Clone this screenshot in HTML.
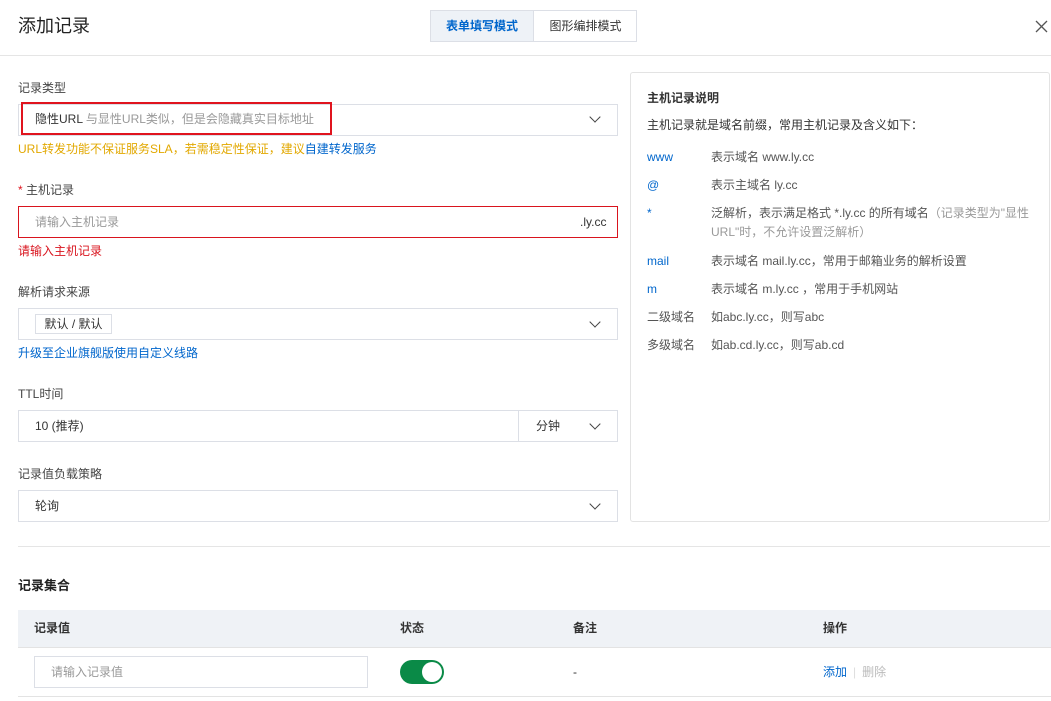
<!DOCTYPE html>
<html><head><meta charset="utf-8"><style>
*{margin:0;padding:0;box-sizing:border-box}
body{width:1051px;height:701px;background:#fff;font-family:"Liberation Sans","Noto Sans CJK SC",sans-serif;font-size:12px;color:#333;position:relative;overflow:hidden}
.a{position:absolute;white-space:nowrap}
.box{position:absolute;border:1px solid #dcdfe6;background:#fff}
.lbl{position:absolute;color:#444;font-size:12px;line-height:16px}
.chev{position:absolute;width:8px;height:8px;border-right:1.3px solid #444;border-bottom:1.3px solid #444;transform:rotate(45deg)}
.blue{color:#0066cc}
.rp .a{line-height:16px}
</style></head><body>
<div class="a" style="left:18px;top:13px;font-size:18px;line-height:26px;color:#222">添加记录</div>
<div class="box" style="left:430px;top:10px;width:207px;height:32px;border-color:#dcdfe6"></div>
<div class="a" style="left:431px;top:11px;width:103px;height:30px;background:#eef2f7;border-right:1px solid #dcdfe6;color:#0066cc;font-weight:bold;text-align:center;line-height:30px">表单填写模式</div>
<div class="a" style="left:535px;top:11px;width:101px;height:30px;text-align:center;line-height:30px;color:#333">图形编排模式</div>
<svg class="a" style="left:1035px;top:20px" width="13" height="13"><path d="M1 1L12 12M12 1L1 12" stroke="#555" stroke-width="1.3"/></svg>
<div class="a" style="left:0;top:55px;width:1051px;height:1px;background:#e5e5e5"></div>

<div class="lbl" style="left:18px;top:80px">记录类型</div>
<div class="box" style="left:18px;top:104px;width:600px;height:32px"></div>
<div class="a" style="left:21px;top:102px;width:311px;height:33px;border:2px solid #e0141e"></div>
<div class="a" style="left:35px;top:111px;line-height:16px;color:#333">隐性URL <span style="color:#999">与显性URL类似，但是会隐藏真实目标地址</span></div>
<div class="chev" style="left:591px;top:113px"></div>
<div class="a" style="left:18px;top:141px;line-height:16px;color:#e2a800">URL转发功能不保证服务SLA，若需稳定性保证，建议<span class="blue">自建转发服务</span></div>

<div class="lbl" style="left:18px;top:182px"><span style="color:#e0141e">*</span> 主机记录</div>
<div class="a" style="left:18px;top:206px;width:600px;height:32px;border:1px solid #d9141e"></div>
<div class="a" style="left:35px;top:214px;line-height:16px;color:#999">请输入主机记录</div>
<div class="a" style="left:580px;top:214px;line-height:16px;color:#333">.ly.cc</div>
<div class="a" style="left:18px;top:243px;line-height:16px;color:#d9141e">请输入主机记录</div>

<div class="lbl" style="left:18px;top:284px">解析请求来源</div>
<div class="box" style="left:18px;top:308px;width:600px;height:32px"></div>
<div class="a" style="left:35px;top:314px;width:77px;height:20px;border:1px solid #dcdfe6;line-height:18px;text-align:center;color:#333">默认 / 默认</div>
<div class="chev" style="left:591px;top:318px"></div>
<div class="a blue" style="left:18px;top:345px;line-height:16px">升级至企业旗舰版使用自定义线路</div>

<div class="lbl" style="left:18px;top:386px">TTL时间</div>
<div class="box" style="left:18px;top:410px;width:600px;height:32px"></div>
<div class="a" style="left:518px;top:411px;width:1px;height:30px;background:#dcdfe6"></div>
<div class="a" style="left:35px;top:418px;line-height:16px">10 (推荐)</div>
<div class="a" style="left:536px;top:418px;line-height:16px">分钟</div>
<div class="chev" style="left:591px;top:420px"></div>

<div class="lbl" style="left:18px;top:466px">记录值负载策略</div>
<div class="box" style="left:18px;top:490px;width:600px;height:32px"></div>
<div class="a" style="left:35px;top:498px;line-height:16px">轮询</div>
<div class="chev" style="left:591px;top:500px"></div>

<div class="rp">
<div class="box" style="left:630px;top:72px;width:420px;height:450px;border-color:#e3e3e3;border-radius:3px"></div>
<div class="a" style="left:647px;top:90px;font-weight:bold;color:#333">主机记录说明</div>
<div class="a" style="left:647px;top:117px;color:#333">主机记录就是域名前缀，常用主机记录及含义如下：</div>
<div class="a blue" style="left:647px;top:149px">www</div><div class="a" style="left:711px;top:149px;color:#555">表示域名 www.ly.cc</div>
<div class="a blue" style="left:647px;top:177px">@</div><div class="a" style="left:711px;top:177px;color:#555">表示主域名 ly.cc</div>
<div class="a blue" style="left:647px;top:205px">*</div><div class="a" style="left:711px;top:205px;color:#555">泛解析，表示满足格式 *.ly.cc 的所有域名<span style="color:#999">（记录类型为"显性</span></div>
<div class="a" style="left:711px;top:224px;color:#999">URL"时，不允许设置泛解析）</div>
<div class="a blue" style="left:647px;top:253px">mail</div><div class="a" style="left:711px;top:253px;color:#555">表示域名 mail.ly.cc，常用于邮箱业务的解析设置</div>
<div class="a blue" style="left:647px;top:281px">m</div><div class="a" style="left:711px;top:281px;color:#555">表示域名 m.ly.cc ，常用于手机网站</div>
<div class="a" style="left:647px;top:309px;color:#555">二级域名</div><div class="a" style="left:711px;top:309px;color:#555">如abc.ly.cc，则写abc</div>
<div class="a" style="left:647px;top:337px;color:#555">多级域名</div><div class="a" style="left:711px;top:337px;color:#555">如ab.cd.ly.cc，则写ab.cd</div>
</div>

<div class="a" style="left:18px;top:546px;width:1032px;height:1px;background:#e5e5e5"></div>
<div class="a" style="left:18px;top:577px;font-size:13px;font-weight:bold;line-height:18px;color:#222">记录集合</div>
<div class="a" style="left:18px;top:610px;width:1033px;height:38px;background:#eff2f6;border-bottom:1px solid #e3e3e3"></div>
<div class="a" style="left:34px;top:620px;font-weight:bold;line-height:16px">记录值</div>
<div class="a" style="left:400px;top:620px;font-weight:bold;line-height:16px">状态</div>
<div class="a" style="left:573px;top:620px;font-weight:bold;line-height:16px">备注</div>
<div class="a" style="left:823px;top:620px;font-weight:bold;line-height:16px">操作</div>
<div class="box" style="left:34px;top:656px;width:334px;height:32px"></div>
<div class="a" style="left:51px;top:664px;line-height:16px;color:#999">请输入记录值</div>
<div class="a" style="left:400px;top:660px;width:44px;height:24px;border-radius:12px;background:#0a8a47"></div>
<div class="a" style="left:422px;top:662px;width:20px;height:20px;border-radius:10px;background:#fff"></div>
<div class="a" style="left:573px;top:664px;line-height:16px">-</div>
<div class="a" style="left:823px;top:664px;line-height:16px"><span class="blue">添加</span><span style="color:#ddd;margin:0 6px">|</span><span style="color:#bbb">删除</span></div>
<div class="a" style="left:18px;top:696px;width:1033px;height:1px;background:#e3e3e3"></div>
</body></html>
